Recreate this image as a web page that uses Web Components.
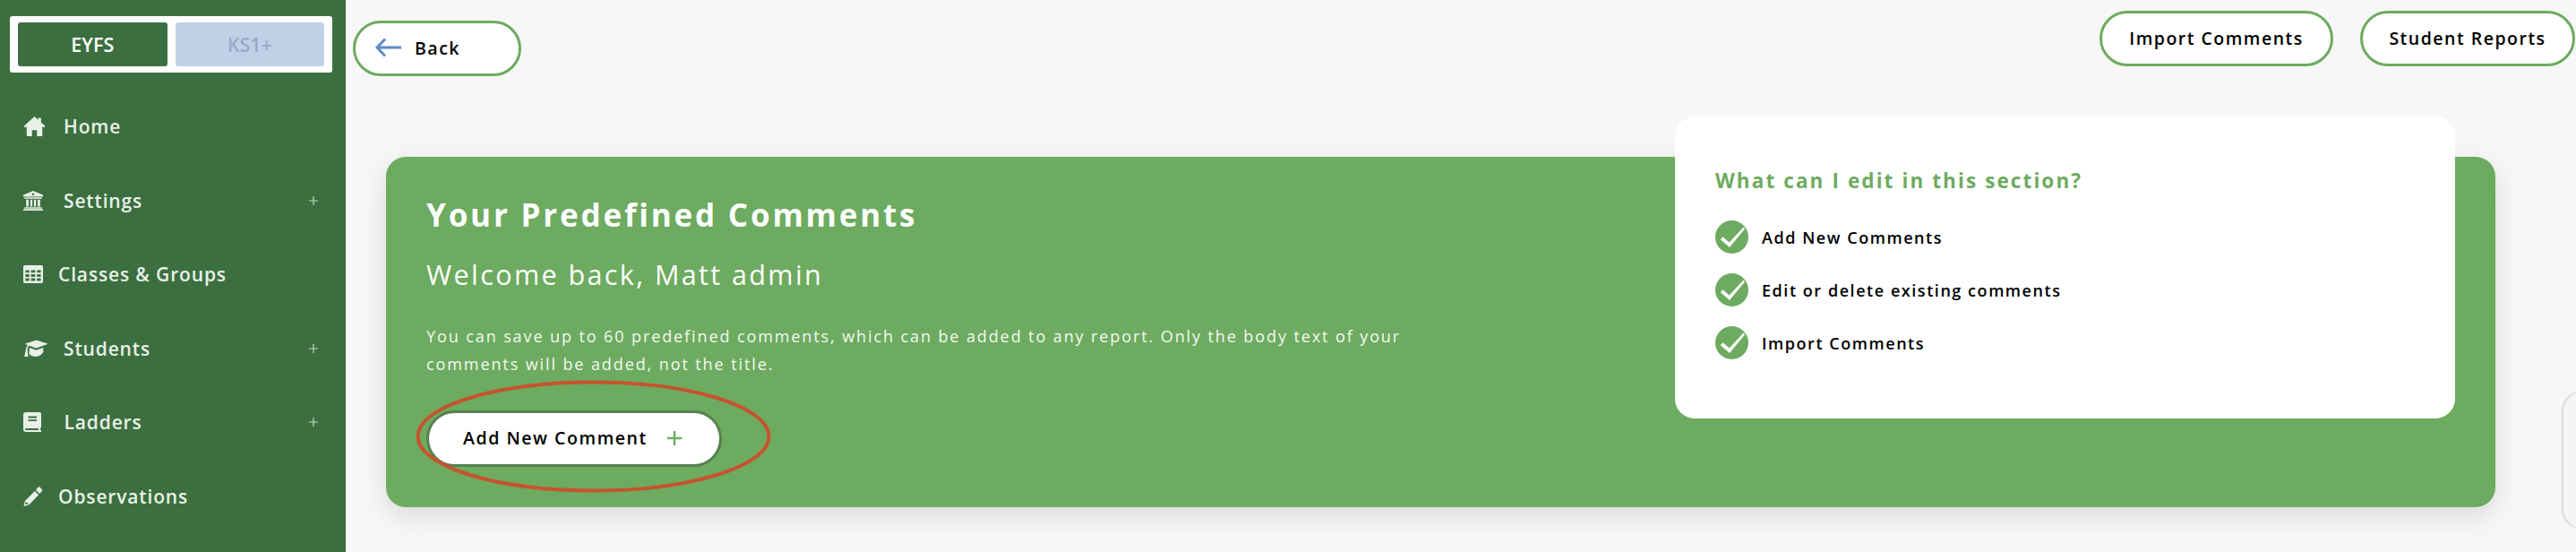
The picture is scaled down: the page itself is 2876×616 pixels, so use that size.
<!DOCTYPE html>
<html><head><meta charset="utf-8">
<style>
html,body{margin:0;height:616px;overflow:hidden;background:#f7f7f7;font-family:"Open Sans",sans-serif}
</style></head><body>
<app-shell>
  <side-bar slot="side">
    <stage-switch></stage-switch>
    <nav-item label="Home" icon="home" gap="45"></nav-item>
    <nav-item label="Settings" icon="bank" gap="45" more></nav-item>
    <nav-item label="Classes &amp; Groups" icon="table" gap="39"></nav-item>
    <nav-item label="Students" icon="cap" gap="45" more></nav-item>
    <nav-item label="Ladders" icon="book" gap="45.5" more></nav-item>
    <nav-item label="Observations" icon="pencil" gap="39"></nav-item>
  </side-bar>
  <top-bar slot="top">
    <pill-button back style="margin-top:11px">Back</pill-button>
    <span style="flex:1"></span>
    <pill-button style="width:261px;margin-right:30px">Import Comments</pill-button>
    <pill-button style="width:240px">Student Reports</pill-button>
  </top-bar>
  <hero-card slot="main"></hero-card>
</app-shell>
<script>
const ICONS={
home:'<svg viewBox="0 0 26 24" width="25" height="22"><path fill="currentColor" d="M13 0 L17.5 4 V1.5 H21 V7.2 L26 11.8 L24.4 13.6 L22.5 12 V23 Q22.5 24 21.5 24 H16 V16.5 H10 V24 H4.5 Q3.5 24 3.5 23 V12 L1.6 13.6 L0 11.8Z"/></svg>',
bank:'<svg viewBox="0 0 24 24" width="22" height="22"><path fill="currentColor" fill-rule="evenodd" d="M12 0 L24 5 V7 H0 V5Z M12 2.6a1.4 1.4 0 1 0 .01 0Z M1.5 8 H22.5 V9.5 H1.5Z M3.5 10.5 H6.5 V19 H3.5Z M8.5 10.5 H11 V19 H8.5Z M13 10.5 H15.5 V19 H13Z M17.5 10.5 H20.5 V19 H17.5Z M1.5 20 H22.5 V21.5 H1.5Z M0 22 H24 V24 H0Z"/></svg>',
table:'<svg viewBox="0 0 23 24" width="22" height="20" preserveAspectRatio="none"><path fill="currentColor" fill-rule="evenodd" d="M2 0 H21 Q23 0 23 2 V22 Q23 24 21 24 H2 Q0 24 0 22 V2 Q0 0 2 0Z M2.5 6.5 V10 H7 V6.5Z M9 6.5 V10 H14 V6.5Z M16 6.5 V10 H20.5 V6.5Z M2.5 12 V15.5 H7 V12Z M9 12 V15.5 H14 V12Z M16 12 V15.5 H20.5 V12Z M2.5 17.5 V21 H7 V17.5Z M9 17.5 V21 H14 V17.5Z M16 17.5 V21 H20.5 V17.5Z"/></svg>',
cap:'<svg viewBox="0 0 29 20" width="28" height="19"><path fill="currentColor" d="M15 0 L29 4.6 L15 9.6 L6.6 6.6 Q5 8 4.6 10.6 Q5.4 11.4 4.7 12.4 L5.6 19.4 H1 L2.6 12.4 Q2 11.4 3 10.4 Q3.4 7.6 5 5.8 L1.4 4.6Z M7 9 L15 11.8 L23 9 L23.4 14 Q20 19.4 15 19.4 Q9 19.4 6.6 16Z"/></svg>',
book:'<svg viewBox="0 0 20 24" width="20" height="22" preserveAspectRatio="none"><path fill="currentColor" fill-rule="evenodd" d="M3 0 H18 Q20 0 20 2 V18 Q20 19 19 19.4 V21.6 H20 V24 H3 Q0 24 0 21 V3 Q0 0 3 0Z M5.5 5 V7 H15 V5Z M5.5 9 V11 H15 V9Z M3.2 19.6 Q1.8 19.6 1.8 20.8 Q1.8 21.8 3.2 21.8 H17 V19.6Z"/></svg>',
pencil:'<svg viewBox="0 0 23 24" width="22" height="22"><path fill="currentColor" fill-rule="evenodd" d="M17.4 0.8 Q18.6 -.2 20 .9 L22 3.2 Q23.2 4.6 22 5.8 L19.4 8.8 L14.8 4Z M13.6 5.4 L18.2 10.2 L6.6 22 L0 24 L1.6 17.4Z M2.8 18.2 L1.9 21.9 L5.6 20.9 L5 19.6 L3.8 19.4Z"/></svg>'
};
function def(name,css,html){
  customElements.define(name,class extends HTMLElement{
    constructor(){super();this.attachShadow({mode:'open'}).innerHTML='<style>'+css+'</style>'+(typeof html==='function'?'':html);}
    connectedCallback(){if(typeof html==='function'){this.shadowRoot.innerHTML='<style>'+css+'</style>'+html(this);}}
  });
}
def('app-shell',`:host{display:flex;height:616px;overflow:hidden;position:relative}
 .side{flex:0 0 386px;display:block}
 .rest{flex:1;min-width:0;display:flex;flex-direction:column;padding:12px 1px 0 8px}
 .m{display:block;margin:90px 89px 0 37px}`,
 `<div class="side"><slot name="side"></slot></div><div class="rest"><slot name="top"></slot><div class="m"><slot name="main"></slot></div></div><edge-card></edge-card>`);
def('edge-card',`:host{position:absolute;left:2862px;top:437px;width:60px;height:153px;border-radius:22px;background:#f5f5f5;box-shadow:-1px 0 3px rgba(0,0,0,.22)}`,'');
def('side-bar',`:host{display:block;height:616px;background:#3b6f3f;padding:18px 15px 0 11px;box-sizing:border-box;color:#e9f0e8}`,`<slot></slot>`);
def('stage-switch',`:host{display:flex;box-sizing:border-box;height:63px;width:360px;background:#fff;border-radius:3px;padding:7px 9px;gap:9px;margin-bottom:19px;font:600 21.5px "Open Sans",sans-serif}
 div{flex:1;display:flex;align-items:center;justify-content:center;border-radius:3px}
 .a{background:#3b6f3f;color:#fff}.b{background:#c0d1e7;color:#96aac8}`,
 `<div class="a">EYFS</div><div class="b">KS1+</div>`);
def('nav-item',`:host{display:flex;align-items:center;height:82.5px;margin-left:15px;position:relative;font:600 21px "Open Sans",sans-serif;letter-spacing:.85px;color:#e9f0e8}
 .i{position:absolute;left:0;top:50%;transform:translateY(-50%);display:flex}
 .p{position:absolute;left:319px;top:50%;transform:translateY(-50%);display:flex}`,
 h=>`<span class="i">${ICONS[h.getAttribute('icon')]}</span><span style="margin-left:${h.getAttribute('gap')-0+0}px">${h.getAttribute('label').replace('&','&amp;')}</span>`+(h.hasAttribute('more')?`<span class="p"><svg width="10" height="10" viewBox="0 0 10 10"><path d="M5 0V10M0 5H10" stroke="#c5d6c5" stroke-width="1.2"/></svg></span>`:''));
def('top-bar',`:host{display:flex;align-items:flex-start}`,`<slot></slot>`);
def('pill-button',`:host{display:inline-flex;align-items:center;justify-content:center;box-sizing:border-box;height:62px;padding-bottom:2px;background:#fff;border:3px solid #6dab60;border-radius:31px;font:600 19.5px "Open Sans",sans-serif;letter-spacing:1.5px;color:#000}
 :host([back]){width:188px;justify-content:flex-start;padding-left:22px}
 svg{margin-right:15px}`,
 h=>(h.hasAttribute('back')?`<svg width="29" height="22" viewBox="0 0 29 22"><path d="M11 1.5 L2 11 L11 20.5 M2 11 H29" fill="none" stroke="#5b8cc6" stroke-width="3"/></svg>`:'')+`<slot></slot>`);
def('hero-card',`:host{display:block;box-sizing:border-box;position:relative;height:391px;background:#6dab60;border-radius:22px;box-shadow:0 10px 30px rgba(0,0,0,.12);color:#fff;padding:47px 45px 0}
 h1{margin:0;font:700 35px/1 "Open Sans",sans-serif;letter-spacing:2.8px;height:36px}
 h2{margin:33px 0 0;font:500 30.5px/1 "Open Sans",sans-serif;letter-spacing:2.4px}
 p{margin:38px 0 0;width:1120px;font:500 18px/31px "Open Sans",sans-serif;letter-spacing:1.9px;color:#f4f8f2}
 add-button{position:absolute;left:45px;top:283px}
 ellipse-mark{position:absolute;left:33px;top:249px}
 info-panel{position:absolute;left:1439px;top:-45px}`,
 `<h1>Your Predefined Comments</h1><h2>Welcome back, Matt admin</h2><p>You can save up to 60 predefined comments, which can be added to any report. Only the body text of your comments will be added, not the title.</p><add-button></add-button><ellipse-mark></ellipse-mark><info-panel></info-panel>`);
def('add-button',`:host{display:flex;align-items:center;box-sizing:border-box;width:330px;height:63px;background:#fff;border:3px solid #55804e;border-radius:32px;padding-left:38px;padding-bottom:2px;font:600 19.5px "Open Sans",sans-serif;letter-spacing:1.55px;color:#000}
 svg{margin-left:22px}`,`Add New Comment<svg width="16" height="16" viewBox="0 0 16 16"><path d="M8 0V16M0 8H16" stroke="#6dab60" stroke-width="2.4"/></svg>`);
def('ellipse-mark',`:host{display:block;width:397px;height:126px;line-height:0}`,`<svg width="397" height="126" viewBox="0 0 397 126"><ellipse cx="198.5" cy="63" rx="196" ry="60.5" fill="none" stroke="#c7532e" stroke-width="4"/></svg>`);
def('info-panel',`:host{display:block;box-sizing:border-box;width:871px;height:337px;background:#fff;border-radius:22px;padding:55px 45px 0;color:#000}
 h3{margin:0 0 28px;font:700 22.5px/33px "Open Sans",sans-serif;letter-spacing:2.1px;color:#6dab60}`,
 `<h3>What can I edit in this section?</h3><check-item>Add New Comments</check-item><check-item>Edit or delete existing comments</check-item><check-item>Import Comments</check-item>`);
def('check-item',`:host{display:flex;align-items:center;height:37px;margin-bottom:22px;font:600 18px "Open Sans",sans-serif;letter-spacing:1.55px;color:#000}
 svg{margin-right:15px;flex:none}`,`<svg width="37" height="37" viewBox="0 0 37 37"><circle cx="18.5" cy="18.5" r="18.5" fill="#6dab60"/><path d="M5.8 21.2 L8.6 18.2 L15.6 24.4 L31.6 7.6 L33 9.4 L16 30Z" fill="#fff"/></svg><slot></slot>`);
</script>
</body></html>
